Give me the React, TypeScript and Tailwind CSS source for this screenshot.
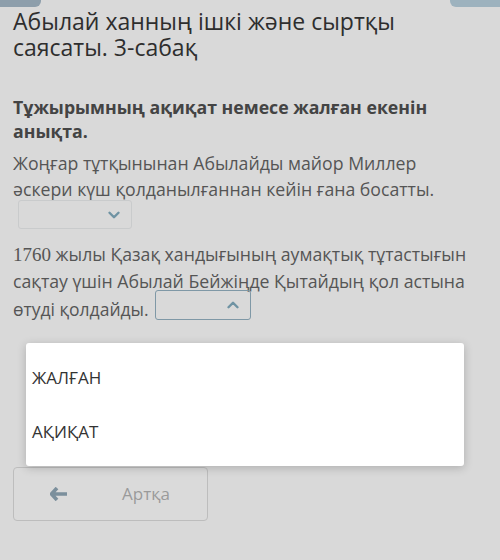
import { ChevronDown, ChevronUp } from 'lucide-react'

function SelectBox({ open, className }: { open?: boolean; className?: string }) {
  return (
    <span
      className={`inline-flex shrink-0 items-center justify-end rounded-[3px] border pr-[8px] ${
        open ? 'border-[#7f98a6]' : 'border-[#c9cbcc]'
      } ${className ?? ''}`}
    >
      {open ? (
        <ChevronUp size={18} strokeWidth={3.2} className="text-[#6f93a3]" />
      ) : (
        <ChevronDown size={18} strokeWidth={3.2} className="text-[#6f93a3]" />
      )}
    </span>
  )
}

export default function App() {
  return (
    <div className="relative w-[500px] h-[560px] overflow-hidden bg-[#d9d9d9] font-['Open_Sans',sans-serif]">
      {/* top corner tabs */}
      <div className="flex justify-between">
        <div className="w-[41px] h-[7px] bg-[#8d9eab] rounded-br-[6px]" />
        <div className="w-[50px] h-[7px] bg-[#9db2be] rounded-bl-[6px]" />
      </div>

      <div className="px-[13px]">
        <h1 className="mt-[1px] text-[23px] leading-[26px] text-[#2e2e2e]">
          Абылай ханның ішкі және сыртқы
          <br />
          саясаты. 3-сабақ
        </h1>

        <p className="mt-[35px] text-[17.7px] leading-[24px] font-bold text-[#444]">
          Тұжырымның ақиқат немесе жалған екенін
          <br />
          анықта.
        </p>

        <p className="mt-[7px] text-[17.7px] leading-[26px] text-[#555]">
          Жоңғар тұтқынынан Абылайды майор Миллер
          <br />
          әскери күш қолданылғаннан кейін ғана босатты.
        </p>
        <div className="mt-[-2px] pl-[5px]">
          <SelectBox className="w-[114px] h-[29px]" />
        </div>

        <p className="mt-[11px] text-[17.7px] leading-[26px] text-[#555]">
          <span className="font-['Liberation_Serif',serif] text-[19px]">1760</span> жылы Қазақ хандығының аумақтық тұтастығын
          <br />
          сақтау үшін Абылай Бейжіңде Қытайдың қол астына
        </p>
        <div className="mt-[-4px] flex items-start">
          <span className="pt-[6px] text-[17.5px] leading-[26px] text-[#555]">өтуді қолдайды.</span>
          <SelectBox open className="ml-[6px] w-[96px] h-[30px]" />
        </div>

        <button className="mt-[145px] flex items-center w-[195px] h-[54px] rounded-[4px] border border-[#bdbdbd] bg-[#dadada]">
          <svg width="18" height="14" viewBox="0 0 18 14" className="ml-[36px]">
            <path d="M7 1 L1.5 7 L7 13 M1.5 7 H17" stroke="#7b8f9c" strokeWidth="3.6" fill="none" strokeLinejoin="round" />
          </svg>
          <span className="ml-[54px] text-[17px] text-[#9a9a9a]">Артқа</span>
        </button>
      </div>

      {/* open dropdown menu */}
      <div className="absolute left-[26px] top-[343px] w-[438px] h-[123px] bg-white rounded-[3px] shadow-[0_2px_10px_rgba(0,0,0,0.2)] flex flex-col justify-center gap-[32px] pl-[6px] text-[17px] text-[#333]">
        <div className="leading-[22px]">ЖАЛҒАН</div>
        <div className="leading-[22px]">АҚИҚАТ</div>
      </div>
    </div>
  )
}
